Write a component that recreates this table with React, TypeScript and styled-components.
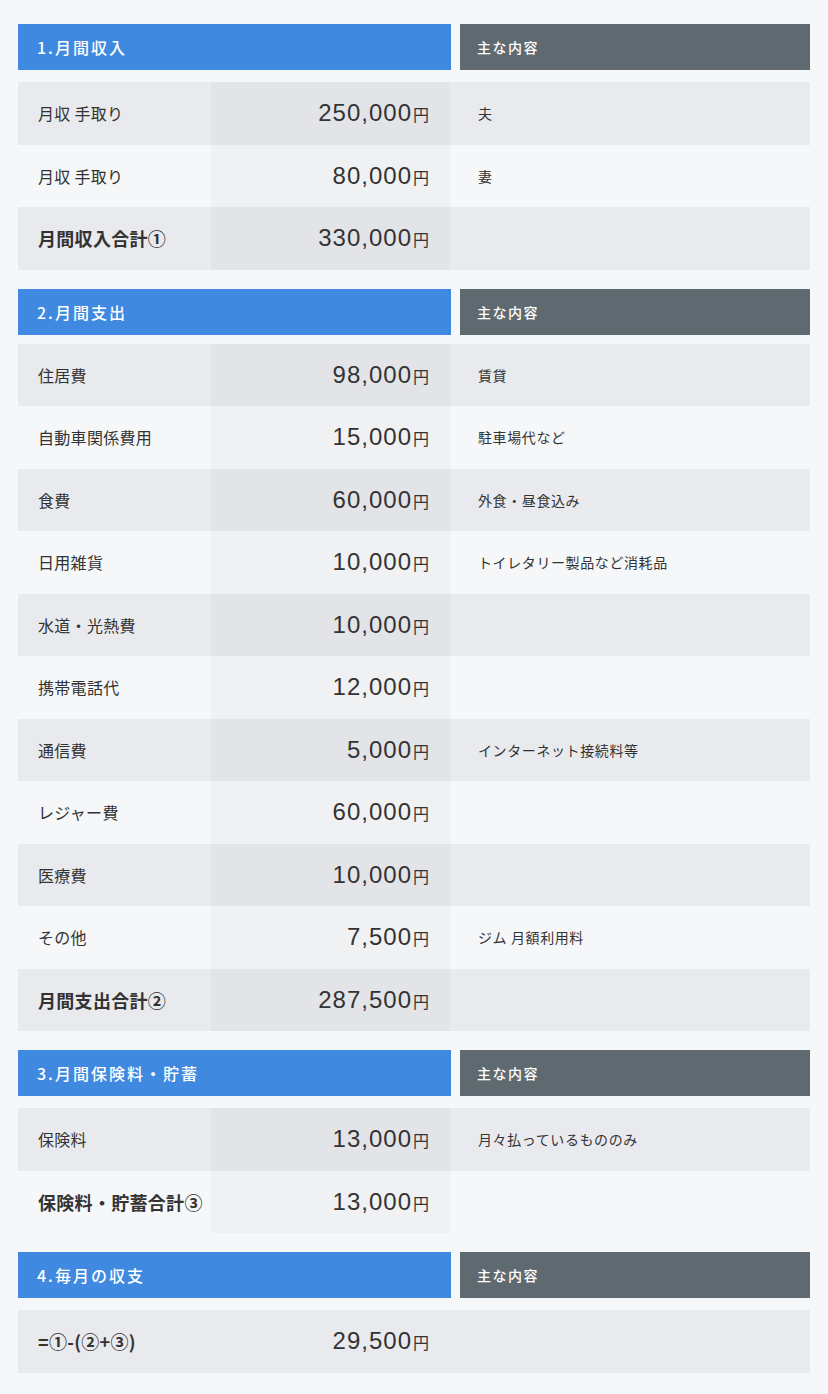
import React from "react";
import styled, { createGlobalStyle } from "styled-components";

const GlobalStyle = createGlobalStyle`
  body {
    margin: 0;
    background: #f6f7f9;
    color: #333;
    font-family: "Noto Sans CJK JP", "Noto Sans", sans-serif;
  }
`;

const Page = styled.div`
  width: 792px;
  padding: 24px 18px 21px;
  display: flex;
  flex-direction: column;
  gap: 19px;
`;

const Section = styled.section<{ $gap: number }>`
  display: flex;
  flex-direction: column;
  gap: ${(p) => p.$gap}px;
`;

const HeaderRow = styled.div`
  display: grid;
  grid-template-columns: 433px 350px;
  column-gap: 9px;
`;

const Title = styled.div`
  height: 46px;
  display: flex;
  align-items: center;
  padding-left: 19px;
  background: #3f8ae0;
  color: #fff;
  font-size: 16px;
  font-weight: 500;
  letter-spacing: 2px;
`;

const NoteHead = styled.div`
  height: 46px;
  display: flex;
  align-items: center;
  padding-left: 17px;
  background: #5f6a70;
  color: #fff;
  font-size: 14px;
  font-weight: 500;
  letter-spacing: 1.5px;
`;

const Rows = styled.div`
  display: flex;
  flex-direction: column;
`;

const Row = styled.div<{ $odd: boolean }>`
  display: grid;
  grid-template-columns: 193px 239px 360px;
  height: 62.5px;
  background: ${(p) => (p.$odd ? "#e9eaed" : "#f6f7f9")};
`;

const Label = styled.div<{ $total?: boolean }>`
  display: flex;
  align-items: center;
  padding-left: 20px;
  white-space: nowrap;
  font-size: ${(p) => (p.$total ? "18px" : "16px")};
  font-weight: ${(p) => (p.$total ? 700 : 400)};
  letter-spacing: 0.3px;
  color: #333;
`;

const Value = styled.div<{ $odd: boolean; $plain?: boolean }>`
  display: flex;
  align-items: center;
  justify-content: flex-end;
  padding-right: 21px;
  background: ${(p) =>
    p.$plain ? "transparent" : p.$odd ? "#e3e4e8" : "#f0f1f3"};
  font-family: "Liberation Sans", Arial, sans-serif;
  font-size: 24px;
  letter-spacing: 1px;
  color: #333;
`;

const Yen = styled.span`
  font-family: "Noto Sans CJK JP", sans-serif;
  font-size: 16px;
  letter-spacing: 0;
  margin-left: 1px;
  position: relative;
  top: 1px;
`;

const Note = styled.div`
  display: flex;
  align-items: center;
  padding-left: 28px;
  font-size: 14px;
  letter-spacing: 0.6px;
  color: #333;
`;

type Item = { label: string; value: string; note?: string; total?: boolean };

type Block = { title: string; gap: number; plain?: boolean; items: Item[] };

const blocks: Block[] = [
  {
    title: "1.月間収入",
    gap: 12,
    items: [
      { label: "月収 手取り", value: "250,000", note: "夫" },
      { label: "月収 手取り", value: "80,000", note: "妻" },
      { label: "月間収入合計①", value: "330,000", total: true },
    ],
  },
  {
    title: "2.月間支出",
    gap: 9,
    items: [
      { label: "住居費", value: "98,000", note: "賃貸" },
      { label: "自動車関係費用", value: "15,000", note: "駐車場代など" },
      { label: "食費", value: "60,000", note: "外食・昼食込み" },
      { label: "日用雑貨", value: "10,000", note: "トイレタリー製品など消耗品" },
      { label: "水道・光熱費", value: "10,000" },
      { label: "携帯電話代", value: "12,000" },
      { label: "通信費", value: "5,000", note: "インターネット接続料等" },
      { label: "レジャー費", value: "60,000" },
      { label: "医療費", value: "10,000" },
      { label: "その他", value: "7,500", note: "ジム 月額利用料" },
      { label: "月間支出合計②", value: "287,500", total: true },
    ],
  },
  {
    title: "3.月間保険料・貯蓄",
    gap: 12,
    items: [
      { label: "保険料", value: "13,000", note: "月々払っているもののみ" },
      { label: "保険料・貯蓄合計③", value: "13,000", total: true },
    ],
  },
  {
    title: "4.毎月の収支",
    gap: 12,
    plain: true,
    items: [{ label: "=①-(②+③)", value: "29,500", total: true }],
  },
];

export default function App() {
  return (
    <>
      <GlobalStyle />
      <Page>
        {blocks.map((b) => (
          <Section key={b.title} $gap={b.gap}>
            <HeaderRow>
              <Title>{b.title}</Title>
              <NoteHead>主な内容</NoteHead>
            </HeaderRow>
            <Rows>
              {b.items.map((it, i) => {
                const odd = i % 2 === 0;
                return (
                  <Row key={i} $odd={odd}>
                    <Label $total={it.total}>{it.label}</Label>
                    <Value $odd={odd} $plain={b.plain}>
                      {it.value}
                      <Yen>円</Yen>
                    </Value>
                    <Note>{it.note}</Note>
                  </Row>
                );
              })}
            </Rows>
          </Section>
        ))}
      </Page>
    </>
  );
}
